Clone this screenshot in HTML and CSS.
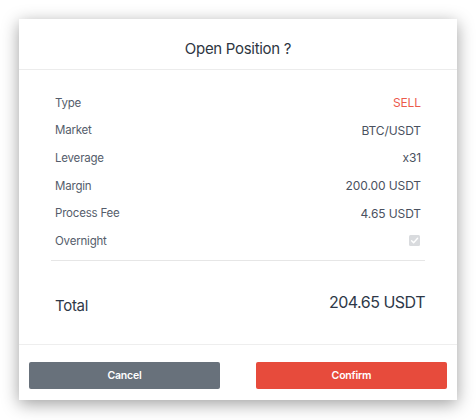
FILE: index.html
```html
<!DOCTYPE html>
<html>
<head>
<meta charset="utf-8">
<link rel="stylesheet" href="styles.css">
</head>
<body>
<div class="modal">
  <div class="modal-header">Open Position ?</div>
  <div class="modal-body">
    <div class="rows">
      <div class="row"><span class="label">Type</span><span class="value sell">SELL</span></div>
      <div class="row"><span class="label">Market</span><span class="value">BTC/USDT</span></div>
      <div class="row"><span class="label">Leverage</span><span class="value">x31</span></div>
      <div class="row"><span class="label">Margin</span><span class="value">200.00 USDT</span></div>
      <div class="row"><span class="label">Process Fee</span><span class="value">4.65 USDT</span></div>
      <div class="row"><span class="label">Overnight</span><span class="check"><svg width="11" height="11" viewBox="0 0 11 11"><rect x="0" y="0" width="11" height="11" rx="1.5" fill="#d9dbde"/><path d="M2.6 5.8 L4.6 7.8 L8.6 3.2" fill="none" stroke="#ffffff" stroke-width="1.4" stroke-linecap="round" stroke-linejoin="round"/></svg></span></div>
    </div>
    <div class="total">
      <span class="total-label">Total</span>
      <span class="total-value">204.65 USDT</span>
    </div>
  </div>
  <div class="modal-footer">
    <button class="btn btn-cancel">Cancel</button>
    <button class="btn btn-confirm">Confirm</button>
  </div>
</div>
</body>
</html>
```

FILE: styles.css
```css
* { box-sizing: border-box; }
html, body { margin: 0; padding: 0; background: #ffffff; }
body {
  padding: 19px 19px 20px 19px;
  font-family: "Inter", "Liberation Sans", sans-serif;
}
.modal {
  width: 438px;
  height: 381px;
  background: #ffffff;
  box-shadow: 0 4px 16px rgba(0,0,0,0.38);
  display: flex;
  flex-direction: column;
}
.modal-header {
  height: 51px;
  border-bottom: 1px solid #ececec;
  display: flex;
  align-items: center;
  justify-content: center;
  font-size: 15px;
  color: #2e3642;
  letter-spacing: -0.3px;
  padding-top: 8px;
}
.modal-body {
  padding: 19px 32px 0 32px;
  flex: 1;
  display: flex;
  flex-direction: column;
}
.rows {
  border-bottom: 1px solid #e6e6e6;
  padding-bottom: 5px;
}
.row {
  height: 27.6px;
  display: flex;
  align-items: center;
  justify-content: space-between;
  padding: 0 4px;
  font-size: 11.5px;
  color: #555d6b;
  letter-spacing: -0.2px;
}
.value { color: #4a5160; font-size: 12px; letter-spacing: -0.1px; }
.sell { color: #ec5a4b; }
.check { display: flex; margin-right: 1px; }
.total {
  flex: 1;
  display: flex;
  justify-content: space-between;
  align-items: baseline;
  padding: 0 0 0 4px;
  margin-top: 31px;
}
.total-label {
  font-size: 15px;
  color: #2e3848;
  letter-spacing: -0.3px;
  position: relative;
  top: 3px;
}
.total-value {
  font-size: 16px;
  color: #2e3848;
  letter-spacing: -0.5px;
}
.modal-footer {
  border-top: 1px solid #eeeeee;
  display: flex;
  justify-content: space-between;
  padding: 17px 10px 11px 10px;
}
.btn {
  width: 191px;
  height: 27px;
  border: none;
  border-radius: 2px;
  color: #ffffff;
  font-family: "Inter", "Liberation Sans", sans-serif;
  font-weight: 600;
  font-size: 10.5px;
  letter-spacing: -0.2px;
}
.btn-cancel { background: #68717b; }
.btn-confirm { background: #e74b3c; }
```
